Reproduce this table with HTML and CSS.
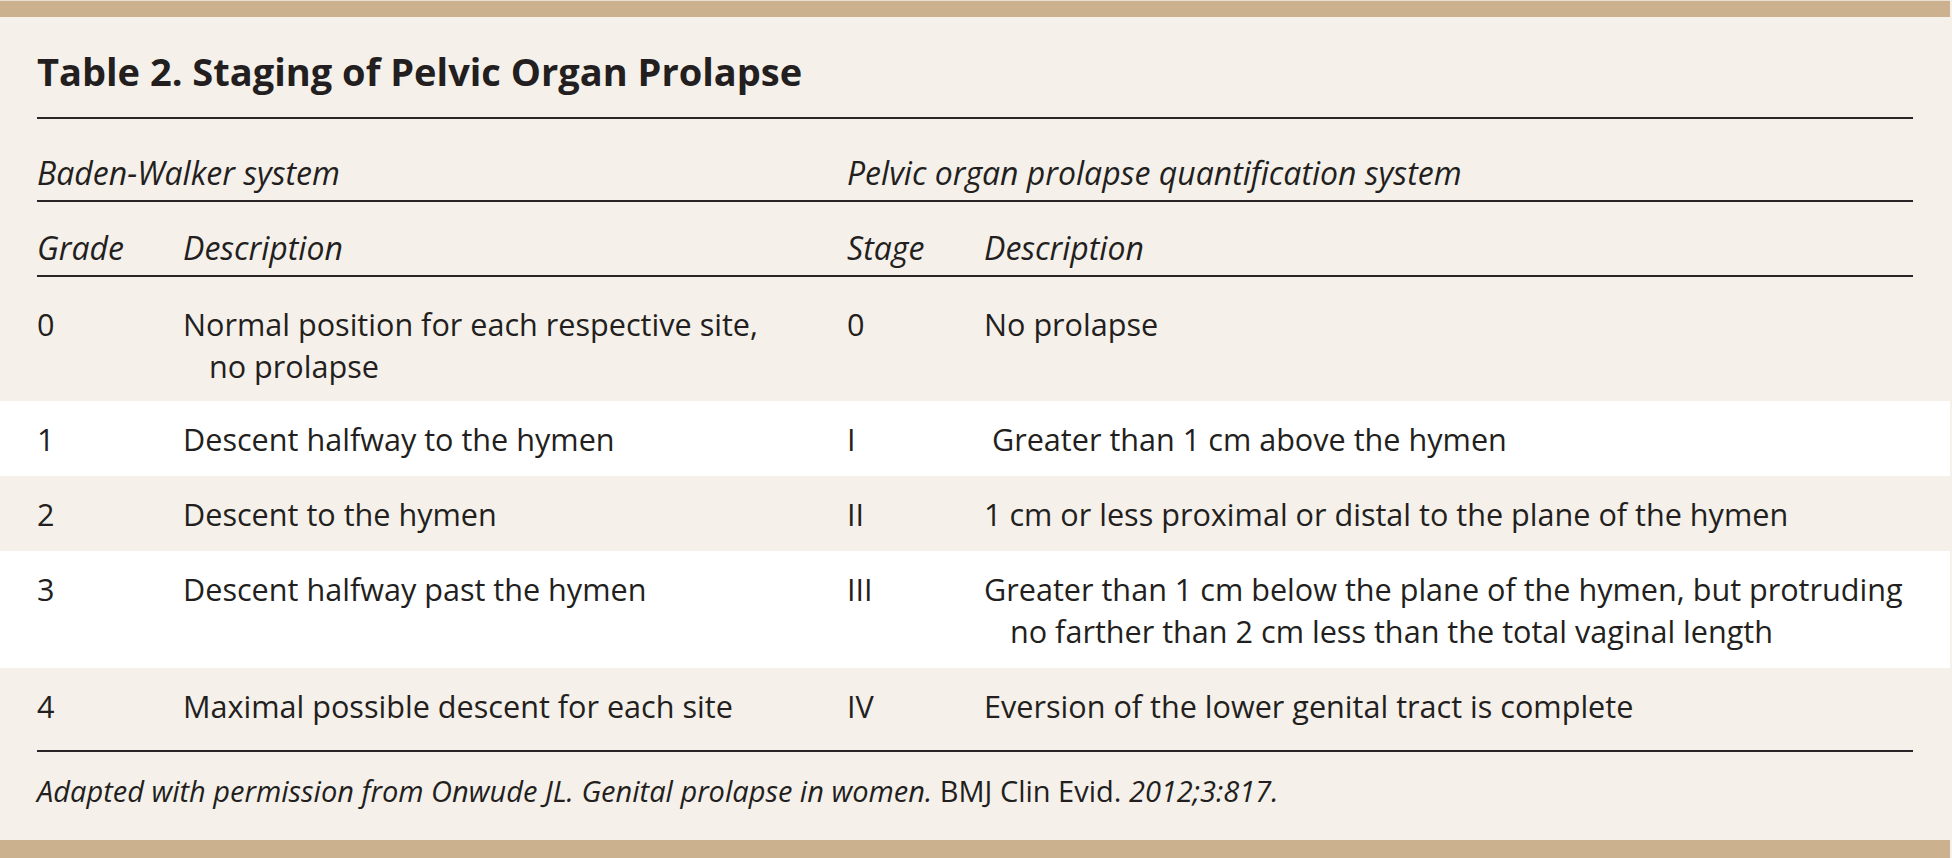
FILE: index.html
```html
<!DOCTYPE html>
<html lang="en">
<head>
<meta charset="utf-8">
<title>Table 2. Staging of Pelvic Organ Prolapse</title>
<link rel="stylesheet" href="styles.css">
</head>
<body>
<main class="sheet">
  <div class="band"></div>
  <h1 class="title">Table 2. Staging of Pelvic Organ Prolapse</h1>

  <div class="row group">
    <div class="span2">Baden-Walker system</div>
    <div class="span2">Pelvic organ prolapse quantification system</div>
  </div>

  <div class="row colhead">
    <div>Grade</div>
    <div>Description</div>
    <div>Stage</div>
    <div>Description</div>
  </div>

  <div class="row data first">
    <div>0</div>
    <div class="hang">Normal position for each respective site, no prolapse</div>
    <div>0</div>
    <div class="hang">No prolapse</div>
  </div>

  <div class="row data white">
    <div>1</div>
    <div class="hang">Descent halfway to the hymen</div>
    <div>I</div>
    <div class="hang">&#160;Greater than 1 cm above the hymen</div>
  </div>

  <div class="row data">
    <div>2</div>
    <div class="hang">Descent to the hymen</div>
    <div>II</div>
    <div class="hang">1 cm or less proximal or distal to the plane of the hymen</div>
  </div>

  <div class="row data white">
    <div>3</div>
    <div class="hang">Descent halfway past the hymen</div>
    <div>III</div>
    <div class="hang">Greater than 1 cm below the plane of the hymen, but protruding no farther than 2 cm less than the total vaginal length</div>
  </div>

  <div class="row data last">
    <div>4</div>
    <div class="hang">Maximal possible descent for each site</div>
    <div>IV</div>
    <div class="hang">Eversion of the lower genital tract is complete</div>
  </div>

  <p class="source"><em>Adapted with permission from Onwude JL. Genital prolapse in women.</em> BMJ Clin Evid. <em>2012;3:817.</em></p>

  <div class="band bottom"></div>
</main>
</body>
</html>
```

FILE: styles.css
```css
html, body {
  margin: 0;
  padding: 0;
}

body {
  background: #f5f0ea;
  color: #231f20;
  font-family: "Open Sans", "Noto Sans", "Liberation Sans", sans-serif;
  font-size: 30.6px;
  font-weight: 400;
}

.sheet {
  width: 1950px;
  height: 858px;
  display: flex;
  flex-direction: column;
  background: #f5f0ea;
}

.band {
  height: 16px;
  border-top: 1px solid #e9e0d2;
  background: #cbb18d;
  flex: none;
}

.band.bottom {
  height: 18px;
  border-top: none;
  margin-top: auto;
}

.title {
  margin: 0 37px 0 37px;
  padding: 30px 0 22px;
  font-size: 38px;
  line-height: 48px;
  font-weight: 700;
  border-bottom: 2px solid #2a2627;
}

.row {
  display: grid;
  grid-template-columns: 146px 664px 137px 1fr;
  padding: 0 37px;
  line-height: 42px;
}

.row > div {
  min-width: 0;
}

.row > div:not(:last-child) {
  padding-right: 70px;
}

.span2 {
  grid-column: span 2;
}

.group,
.colhead {
  font-style: italic;
  font-size: 32px;
  margin: 0 37px;
  padding-left: 0;
  padding-right: 0;
  border-bottom: 2px solid #2a2627;
}

.group {
  padding-top: 33px;
  padding-bottom: 6px;
}

.colhead {
  padding-top: 25px;
  padding-bottom: 6px;
}

.data {
  padding-top: 17px;
  padding-bottom: 16px;
  padding-right: 12px;
}

.data.white {
  background: #ffffff;
}

.data.first {
  padding-top: 26px;
  padding-bottom: 14px;
}

.data.last {
  padding-bottom: 23px;
  margin: 0 37px;
  padding-left: 0;
  padding-right: 0;
  border-bottom: 2px solid #2a2627;
}

.hang {
  padding-left: 26px;
  text-indent: -26px;
}

.source {
  margin: 0 37px;
  padding-top: 21px;
  font-size: 29px;
  line-height: 36px;
}
```
